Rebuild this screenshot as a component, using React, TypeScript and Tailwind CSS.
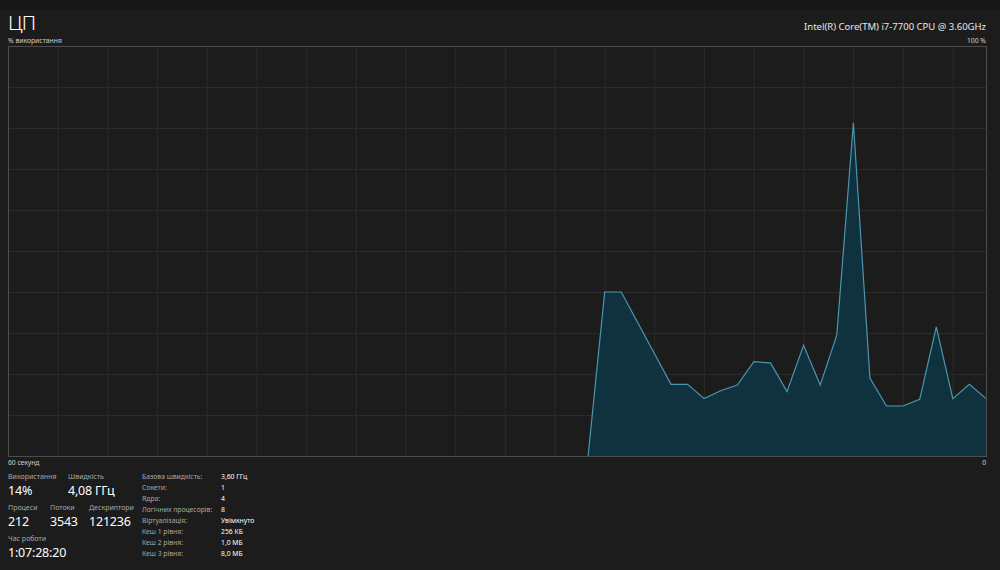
import React from "react";

// CPU usage values, newest first (percent)
const samples = [
  14, 17.5, 14, 31.5, 13.8, 12.2, 12.2, 19, 81.3, 29.5, 17.3, 27, 15.7, 22.7,
  23, 17.3, 15.9, 14, 17.5, 17.5, 25, 32.5, 40, 40, 0,
];

const W = 979;
const H = 411;
const STEP = 16.58;

function CpuGraph() {
  const pts = samples.map((v, k) => [978 - STEP * k, 410 - v * 4.1]);
  const line = pts.map(([x, y]) => `${x.toFixed(1)},${y.toFixed(1)}`).join(" ");
  const last = pts[pts.length - 1];
  const area = `${line} ${last[0].toFixed(1)},410 978,410`;
  const vLines = Array.from({ length: 19 }, (_, k) => 50 + 49.72 * k);
  const hLines = Array.from({ length: 9 }, (_, k) => 41 * (k + 1));

  return (
    <svg width={W} height={H} viewBox={`0 0 ${W} ${H}`} className="block">
      {vLines.map((x) => (
        <line key={x} x1={x} y1={0} x2={x} y2={H} stroke="#2b2b2b" strokeWidth={1} />
      ))}
      {hLines.map((y) => (
        <line key={y} x1={0} y1={y + 0.5} x2={W} y2={y + 0.5} stroke="#2b2b2b" strokeWidth={1} />
      ))}
      <polygon points={area} fill="#10313e" />
      <polyline points={line} fill="none" stroke="#4a97ae" strokeWidth={1.2} />
      <rect x={0.5} y={0.5} width={W - 1} height={H - 1} fill="none" stroke="#4d4d4d" strokeWidth={1} />
    </svg>
  );
}

const details: [string, string][] = [
  ["Базова швидкість:", "3,60 ГГц"],
  ["Сокети:", "1"],
  ["Ядра:", "4"],
  ["Логічних процесорів:", "8"],
  ["Віртуалізація:", "Увімкнуто"],
  ["Кеш 1 рівня:", "256 КБ"],
  ["Кеш 2 рівня:", "1,0 МБ"],
  ["Кеш 3 рівня:", "8,0 МБ"],
];

function Stat({ label, value, w }: { label: string; value: string; w: string }) {
  return (
    <div className={`flex flex-col ${w}`}>
      <span className="text-[7px] leading-[11px] text-[#a8a8a8]">{label}</span>
      <span className="text-[12.5px] leading-[17px] tracking-[-0.2px] text-white">{value}</span>
    </div>
  );
}

export default function App() {
  return (
    <div
      className="w-[1000px] h-[570px] bg-[#1c1c1c] text-white overflow-hidden"
      style={{ fontFamily: '"Noto Sans", "Open Sans", sans-serif' }}
    >
      <div className="h-[10px] bg-[#171717]" />

      {/* Header */}
      <div className="flex items-baseline justify-between pl-[8px] pr-[14px] h-[26px]">
        <span className="text-[20px] leading-[26px] font-light tracking-[-0.8px]">ЦП</span>
        <span className="text-[9.5px] leading-[26px] text-[#e8e8e8]">
          Intel(R) Core(TM) i7-7700 CPU @ 3.60GHz
        </span>
      </div>

      <div className="flex justify-between pl-[8px] pr-[14px] h-[10px] text-[6.8px] leading-[10px] text-[#cfcfcf]">
        <span>% використання</span>
        <span>100 %</span>
      </div>

      {/* Graph */}
      <div className="pl-[8px]">
        <CpuGraph />
      </div>

      <div className="flex justify-between pl-[8px] pr-[14px] h-[12px] text-[6.7px] leading-[12px] text-[#cfcfcf]">
        <span>60 секунд</span>
        <span>0</span>
      </div>

      {/* Stats */}
      <div className="flex pl-[8px] pt-[2px]">
        <div className="w-[134px] flex flex-col">
          <div className="flex">
            <Stat label="Використання" value="14%" w="w-[60px]" />
            <Stat label="Швидкість" value="4,08 ГГц" w="w-[70px]" />
          </div>
          <div className="flex mt-[3px]">
            <Stat label="Процеси" value="212" w="w-[42px]" />
            <Stat label="Потоки" value="3543" w="w-[39px]" />
            <Stat label="Дескриптори" value="121236" w="w-[50px]" />
          </div>
          <div className="flex mt-[3px]">
            <Stat label="Час роботи" value="1:07:28:20" w="w-[80px]" />
          </div>
        </div>

        <div className="grid grid-cols-[79px_auto] auto-rows-[11px] text-[6.8px] leading-[11px]">
          {details.map(([k, v]) => (
            <React.Fragment key={k}>
              <span className="text-[#a8a8a8]">{k}</span>
              <span className="text-white">{v}</span>
            </React.Fragment>
          ))}
        </div>
      </div>
    </div>
  );
}
